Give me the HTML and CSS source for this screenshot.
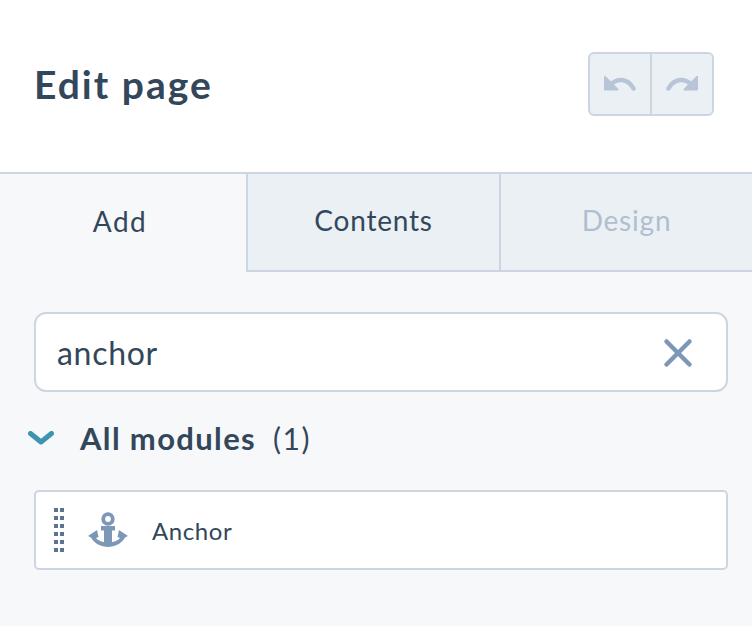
FILE: index.html
```html
<!DOCTYPE html>
<html lang="en">
<head>
    <meta charset="UTF-8">
    <title>Edit page</title>
    <link rel="stylesheet" href="styles.css">
</head>
<body>
    <header class="header">
        <h1>Edit page</h1>
        <div class="history">
            <button class="history-btn" type="button" aria-label="Undo">
                <svg width="32" height="16" viewBox="0 0 32 16">
                    <path class="arrow-head" d="M1 1V13.500H13.500Z" />
                    <path class="arrow-arc" d="M6 9C10 5 14 3.800 18 4C23 4.500 27 8 29.500 12.500" />
                </svg>
            </button>
            <button class="history-btn" type="button" aria-label="Redo">
                <svg width="32" height="16" viewBox="0 0 32 16">
                    <path class="arrow-head" d="M31 1V13.500H18.500Z" />
                    <path class="arrow-arc" d="M26 9C22 5 18 3.800 14 4C9 4.500 5 8 2.500 12.500" />
                </svg>
            </button>
        </div>
    </header>

    <nav class="tabs">
        <div class="tab tab-active">Add</div>
        <div class="tab">Contents</div>
        <div class="tab tab-disabled">Design</div>
    </nav>

    <main class="panel">
        <div class="search">
            <input class="search-input" type="text" value="anchor">
            <svg class="search-clear" width="30" height="30" viewBox="0 0 30 30"><path d="M3.500 3.500l23 23M26.500 3.500l-23 23" /></svg>
        </div>

        <div class="group-title">
            <svg class="chevron" width="26" height="14" viewBox="0 0 26 14"><path d="M2.500 2.500L13 11 23.500 2.500" /></svg>
            <span class="group-name">All modules</span>
            <span class="group-count">(1)</span>
        </div>

        <div class="module">
            <div class="grip">
                <span></span><span></span><span></span><span></span>
                <span></span><span></span><span></span><span></span>
                <span></span><span></span><span></span><span></span>
            </div>
            <svg class="anchor-icon" width="40" height="36" viewBox="0 0 40 36">
                <circle class="anchor-ring" cx="20" cy="7" r="4.800" />
                <path d="M13 14H27V18.500H24V30C27.500 29.500 30.500 28 32 26L29.500 25 31 18 40 24 37 25.500C33.500 31.500 27 35 20 35S6.500 31.500 3 25.500L0 24 9 18 10.500 25 8 26C9.500 28 12.500 29.500 16 30V18.500H13Z" />
            </svg>
            <span class="module-name">Anchor</span>
        </div>
    </main>
</body>
</html>
```

FILE: styles.css
```css
/* page */
html, body {
    height: 100%;
}
body {
    margin: 0;
    background-color: #f6f8fa;
    color: #33475b;
    font-family: Lato, "Open Sans", sans-serif;
    overflow: hidden;
}

/* header */
.header {
    height: 172px;
    box-sizing: border-box;
    padding: 52px 38px 0 34px;
    background-color: #ffffff;
    display: flex;
    justify-content: space-between;
    align-items: flex-start;
}
.header h1 {
    margin: 9px 0 0;
    font-size: 39px;
    line-height: 46px;
    font-weight: 700;
    letter-spacing: 2px;
}
.history {
    display: flex;
    height: 64px;
    box-sizing: border-box;
    border: 2px solid #cbd6e2;
    border-radius: 6px;
    background-color: #ebf0f5;
}
.history-btn {
    width: 60px;
    padding: 0;
    border: none;
    background: none;
    display: flex;
    align-items: center;
    justify-content: center;
}
.history-btn + .history-btn {
    width: 62px;
    border-left: 2px solid #cbd6e2;
}
.arrow-head {
    fill: #b7c5d6;
    stroke: #b7c5d6;
    stroke-width: 2;
    stroke-linejoin: round;
}
.arrow-arc {
    fill: none;
    stroke: #b7c5d6;
    stroke-width: 4.500;
    stroke-linecap: round;
}

/* tabs */
.tabs {
    display: flex;
    height: 100px;
    box-sizing: border-box;
    border-top: 2px solid #cbd6e2;
}
.tab {
    flex: 1;
    display: flex;
    align-items: center;
    justify-content: center;
    padding-bottom: 4px;
    box-sizing: border-box;
    background-color: #ebf0f5;
    border-bottom: 2px solid #cbd6e2;
    border-left: 2px solid #cbd6e2;
    font-size: 28px;
    letter-spacing: 0.8px;
}
.tab-active {
    flex: 0 0 246px;
    padding-right: 6px;
    background-color: #f6f8fa;
    border-left: none;
    border-bottom: none;
    letter-spacing: 1.5px;
}
.tab-disabled {
    color: #b0bfd0;
}

/* search + list */
.panel {
    padding: 40px 24px 0 34px;
}
.search {
    position: relative;
}
.search-input {
    display: block;
    width: 100%;
    height: 80px;
    box-sizing: border-box;
    padding: 0 70px 0 21px;
    border: 2px solid #cbd6e2;
    border-radius: 12px;
    background-color: #ffffff;
    color: #33475b;
    font-family: inherit;
    font-size: 32px;
    letter-spacing: 0.7px;
}
.search-clear {
    position: absolute;
    top: 26px;
    right: 35px;
    fill: none;
    stroke: #7c98b6;
    stroke-width: 4.500;
    stroke-linecap: round;
}

.group-title {
    display: flex;
    align-items: center;
    height: 48px;
    margin: 22px 0 28px -6px;
}
.chevron {
    fill: none;
    stroke: #3d94b0;
    stroke-width: 5;
    stroke-linecap: round;
    stroke-linejoin: round;
    margin-right: 26px;
}
.group-name {
    font-size: 31px;
    font-weight: 700;
    letter-spacing: 1.35px;
}
.group-count {
    margin-left: 17px;
    font-size: 30px;
    letter-spacing: 1.5px;
}

.module {
    display: flex;
    align-items: center;
    height: 80px;
    box-sizing: border-box;
    padding-left: 18px;
    border: 2px solid #cbd6e2;
    border-radius: 5px;
    background-color: #ffffff;
}
.grip {
    display: grid;
    grid-template-columns: 4px 4px;
    grid-auto-rows: 4px;
    gap: 4px 2px;
    width: 10px;
    margin-right: 24px;
}
.grip span {
    background-color: #5c7392;
}
.anchor-icon {
    fill: #7c98b6;
    margin-right: 24px;
}
.anchor-ring {
    fill: none;
    stroke: #7c98b6;
    stroke-width: 3.800;
}
.module-name {
    font-size: 24px;
    letter-spacing: 0.6px;
}
```
